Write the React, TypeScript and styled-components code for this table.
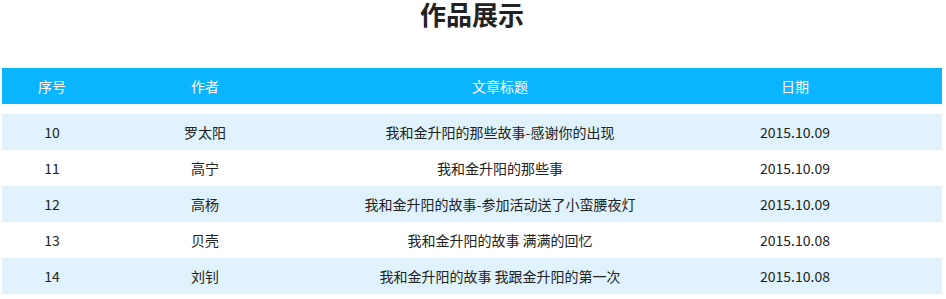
import React from 'react';
import styled, { createGlobalStyle } from 'styled-components';

const GlobalStyle = createGlobalStyle`
  html, body {
    margin: 0;
    padding: 0;
    background: #fff;
  }
  body {
    font-family: "Noto Sans CJK SC", "Microsoft YaHei", "Noto Sans", sans-serif;
    color: #222;
  }
`;

interface Row {
  id: number;
  author: string;
  title: string;
  date: string;
}

const rows: Row[] = [
  { id: 10, author: '罗太阳', title: '我和金升阳的那些故事-感谢你的出现', date: '2015.10.09' },
  { id: 11, author: '高宁', title: '我和金升阳的那些事', date: '2015.10.09' },
  { id: 12, author: '高杨', title: '我和金升阳的故事-参加活动送了小蛮腰夜灯', date: '2015.10.09' },
  { id: 13, author: '贝壳', title: '我和金升阳的故事 满满的回忆', date: '2015.10.08' },
  { id: 14, author: '刘钊', title: '我和金升阳的故事 我跟金升阳的第一次', date: '2015.10.08' },
];

const Page = styled.div`
  padding: 0 4px 0 2px;
`;

const Title = styled.h1`
  margin: 0;
  padding-top: 1px;
  height: 67px;
  font-size: 26px;
  font-weight: 700;
  line-height: 26px;
  text-align: center;
  color: #222;
`;

const Grid = styled.div<{ $head?: boolean; $striped?: boolean }>`
  display: grid;
  grid-template-columns: 100px 206px 384px 1fr;
  height: 36px;
  align-items: center;
  font-size: 14px;
  background: ${(p) => (p.$head ? '#0ab4ff' : p.$striped ? '#e0f2fb' : '#fff')};
  color: ${(p) => (p.$head ? '#fff' : '#222')};
  margin-bottom: ${(p) => (p.$head ? '10px' : '0')};
`;

const Cell = styled.div<{ $last?: boolean }>`
  text-align: center;
  white-space: nowrap;
  padding-right: ${(p) => (p.$last ? '44px' : '0')};
`;

export default function App() {
  return (
    <Page>
      <GlobalStyle />
      <Title>作品展示</Title>
      <Grid $head>
        <Cell>序号</Cell>
        <Cell>作者</Cell>
        <Cell>文章标题</Cell>
        <Cell $last>日期</Cell>
      </Grid>
      {rows.map((r, i) => (
        <Grid key={r.id} $striped={i % 2 === 0}>
          <Cell>{r.id}</Cell>
          <Cell>{r.author}</Cell>
          <Cell>{r.title}</Cell>
          <Cell $last>{r.date}</Cell>
        </Grid>
      ))}
    </Page>
  );
}
